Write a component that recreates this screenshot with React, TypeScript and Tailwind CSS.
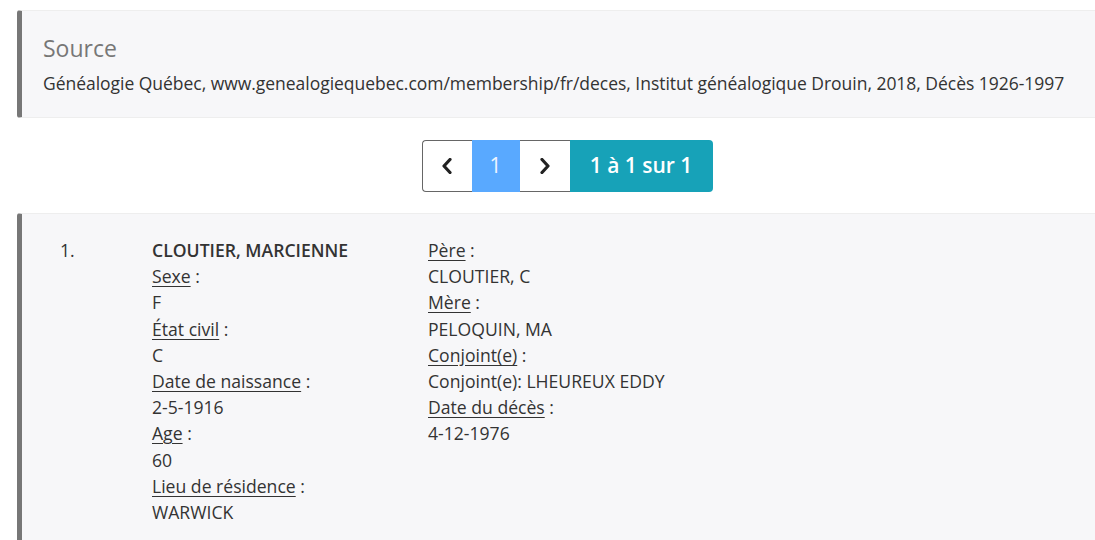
import React from 'react';

const font = { fontFamily: '"Open Sans", "Liberation Sans", sans-serif' };

function Label({ children }: { children: React.ReactNode }) {
  return (
    <div>
      <span className="underline decoration-[#333] underline-offset-[3px]">{children}</span> :
    </div>
  );
}

function Chevron({ dir }: { dir: 'left' | 'right' }) {
  return (
    <svg width="12" height="16" viewBox="0 0 12 16" fill="none">
      <polyline
        points={dir === 'left' ? '9,1.5 3,8 9,14.5' : '3,1.5 9,8 3,14.5'}
        stroke="#222"
        strokeWidth="3.2"
        strokeLinecap="round"
        strokeLinejoin="round"
      />
    </svg>
  );
}

export default function App() {
  return (
    <div className="w-[1095px] h-[540px] overflow-hidden bg-white text-[#333]" style={font}>
      <div className="w-[1117px] pl-[17px] pt-[10px]">
        {/* source */}
        <div className="bg-[#f7f7f9] border border-[#eee] border-l-[5px] border-l-[#777] rounded-[3px] px-[21px] pt-[23px] pb-[22px]">
          <h4 className="text-[23px] leading-[28px] text-[#777] mb-[9px]">Source</h4>
          <p className="text-[17.5px] leading-[24px] tracking-[-0.03px]">
            Généalogie Québec, www.genealogiequebec.com/membership/fr/deces, Institut généalogique Drouin, 2018, Décès 1926-1997
          </p>
        </div>

        {/* pagination */}
        <div className="flex justify-center mt-[22px] mb-[21px]">
          <div className="flex h-[52px]">
            <div className="w-[50px] flex items-center justify-center bg-white border border-[#666] border-r-0 rounded-l-[4px]">
              <Chevron dir="left" />
            </div>
            <div className="w-[48px] flex items-center justify-center bg-[#59a9ff] text-[21px] text-[#eef5ff] border-y border-[#59a9ff]">
              1
            </div>
            <div className="w-[50px] flex items-center justify-center bg-white border-y border-[#666]">
              <Chevron dir="right" />
            </div>
            <div className="w-[143px] flex items-center justify-center bg-[#17a2b8] text-white text-[21px] font-semibold rounded-r-[4px]">
              1 à 1 sur 1
            </div>
          </div>
        </div>

        {/* result */}
        <div className="bg-[#f7f7f9] border border-[#eee] border-l-[5px] border-l-[#777] rounded-[3px] pt-[23px] pb-[20px] text-[17.6px] leading-[26.2px]">
          <div className="flex">
            <div className="w-[130px] pl-[38px]">1.</div>
            <div className="w-[276px]">
              <div className="font-semibold">CLOUTIER, MARCIENNE</div>
              <Label>Sexe</Label>
              <div>F</div>
              <Label>État civil</Label>
              <div>C</div>
              <Label>Date de naissance</Label>
              <div>2-5-1916</div>
              <Label>Age</Label>
              <div>60</div>
              <Label>Lieu de résidence</Label>
              <div>WARWICK</div>
            </div>
            <div>
              <Label>Père</Label>
              <div>CLOUTIER, C</div>
              <Label>Mère</Label>
              <div>PELOQUIN, MA</div>
              <Label>Conjoint(e)</Label>
              <div>Conjoint(e): LHEUREUX EDDY</div>
              <Label>Date du décès</Label>
              <div>4-12-1976</div>
            </div>
          </div>
        </div>
      </div>
    </div>
  );
}
